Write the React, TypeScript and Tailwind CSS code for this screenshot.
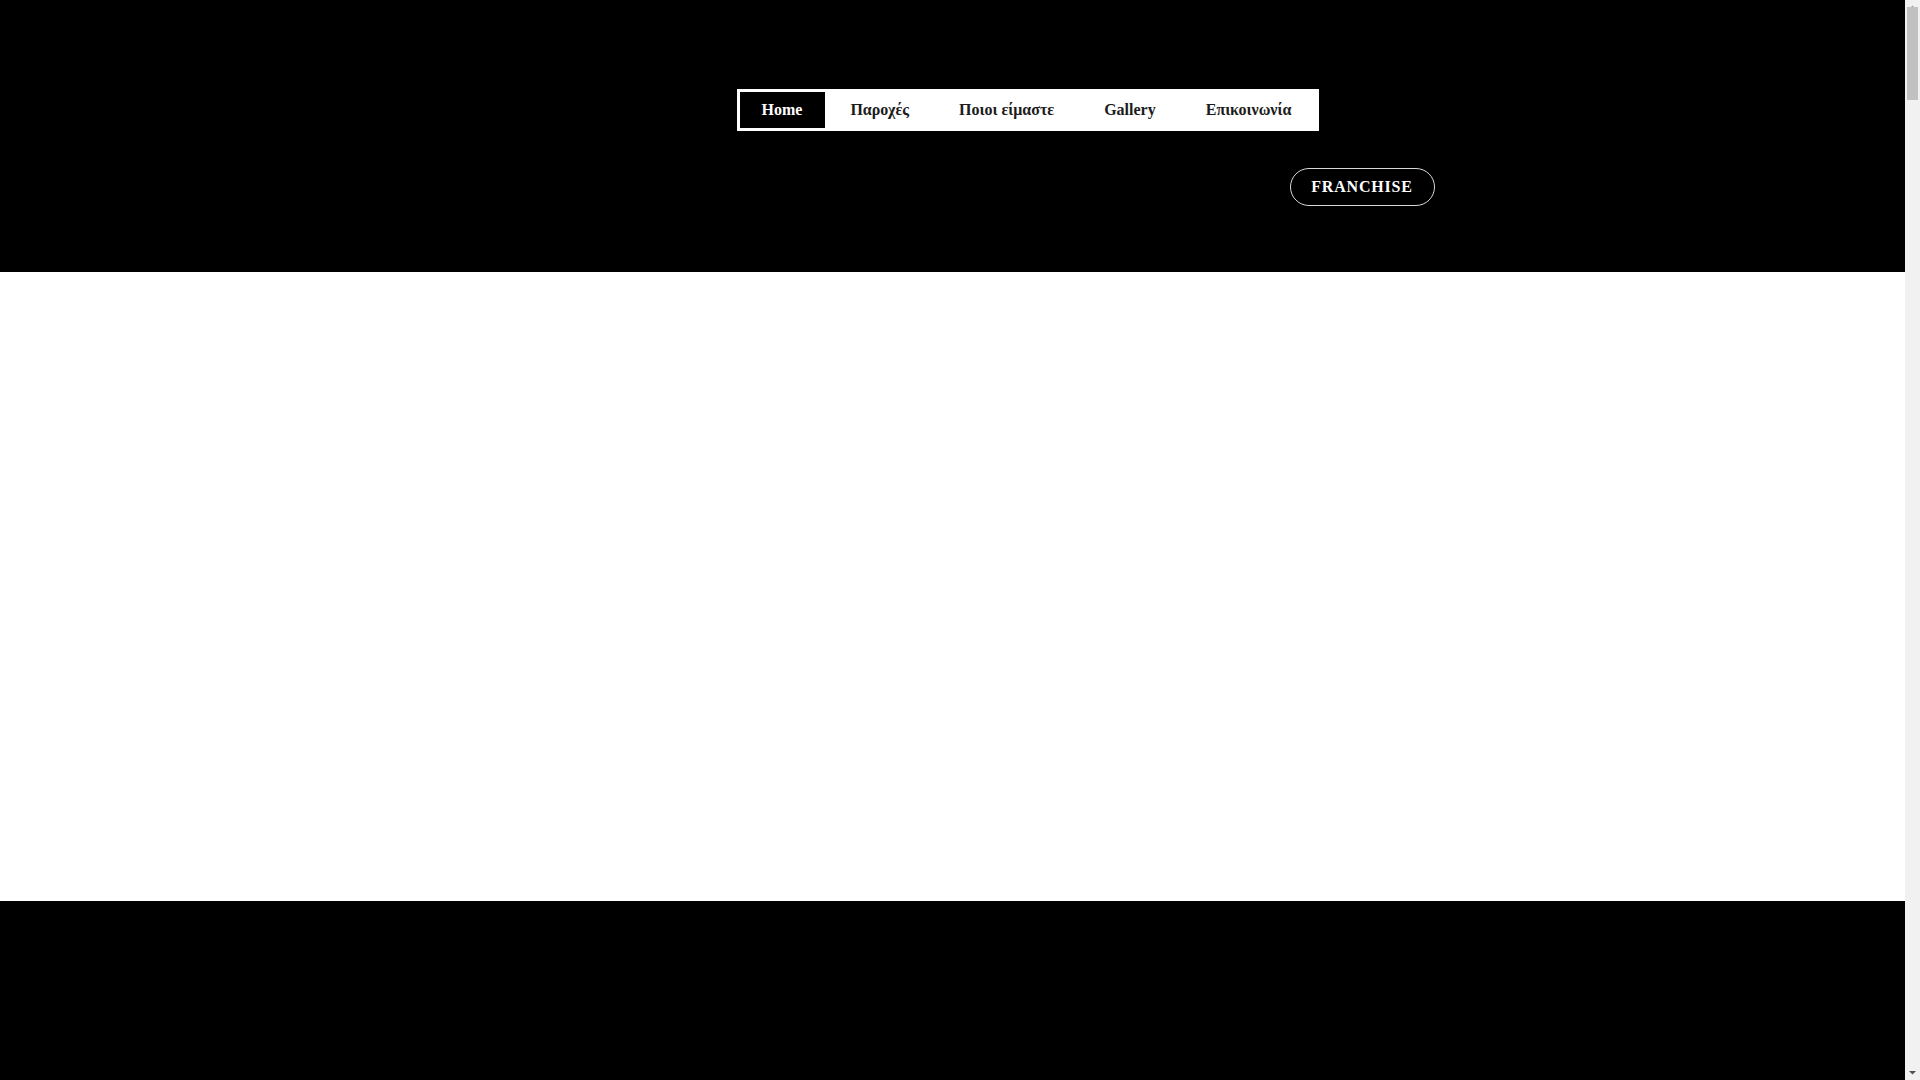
const navItems = ["Home", "Παροχές", "Ποιοι είμαστε", "Gallery", "Επικοινωνία"];

function Nav({ active }: { active: string }) {
  return (
    <nav className="flex h-[42px] items-stretch border-[3px] border-white bg-white">
      {navItems.map((item) => (
        <a
          key={item}
          href="#"
          className={
            item === active
              ? "flex items-center bg-black pl-[22px] pr-[23px] text-white"
              : "flex items-center px-[25px] text-[#1c1c1c]"
          }
        >
          {item}
        </a>
      ))}
    </nav>
  );
}

// classic window scrollbar, drawn over the right edge
function Scrollbar() {
  return (
    <div className="fixed right-0 top-0 flex h-screen w-[15px] flex-col items-center bg-[#f1f1f1]">
      <svg width="15" height="15" viewBox="0 0 15 15" className="shrink-0">
        <path d="M4 9 L11 9 L7.5 5.5 Z" fill="#a3a3a3" />
      </svg>
      <div className="mt-[-8px] h-[93px] w-[11px] bg-[#c1c1c1]" />
      <div className="flex-1" />
      <svg width="15" height="15" viewBox="0 0 15 15" className="shrink-0">
        <path d="M4 6 L11 6 L7.5 9.5 Z" fill="#505050" />
      </svg>
    </div>
  );
}

export default function App() {
  return (
    <div className="bg-black font-['Liberation_Serif','Times_New_Roman',serif]">
      <div className="w-[1905px]">
        <header className="h-[272px] bg-black">
          <div className="mx-auto flex w-[980px] flex-col">
            <div className="ml-[274px] mt-[89px] flex text-[16px] font-bold">
              <Nav active="Home" />
            </div>
            <div className="mt-[37px] flex justify-end pr-[8px]">
              <a
                href="#"
                className="flex h-[38px] w-[145px] items-center justify-center rounded-full border border-[#d9d9d9] text-[16px] font-bold tracking-[0.8px] text-white"
              >
                FRANCHISE
              </a>
            </div>
          </div>
        </header>

        <section className="h-[629px] bg-white" />

        <section className="h-[11100px] bg-black" />
      </div>
      <Scrollbar />
    </div>
  );
}
